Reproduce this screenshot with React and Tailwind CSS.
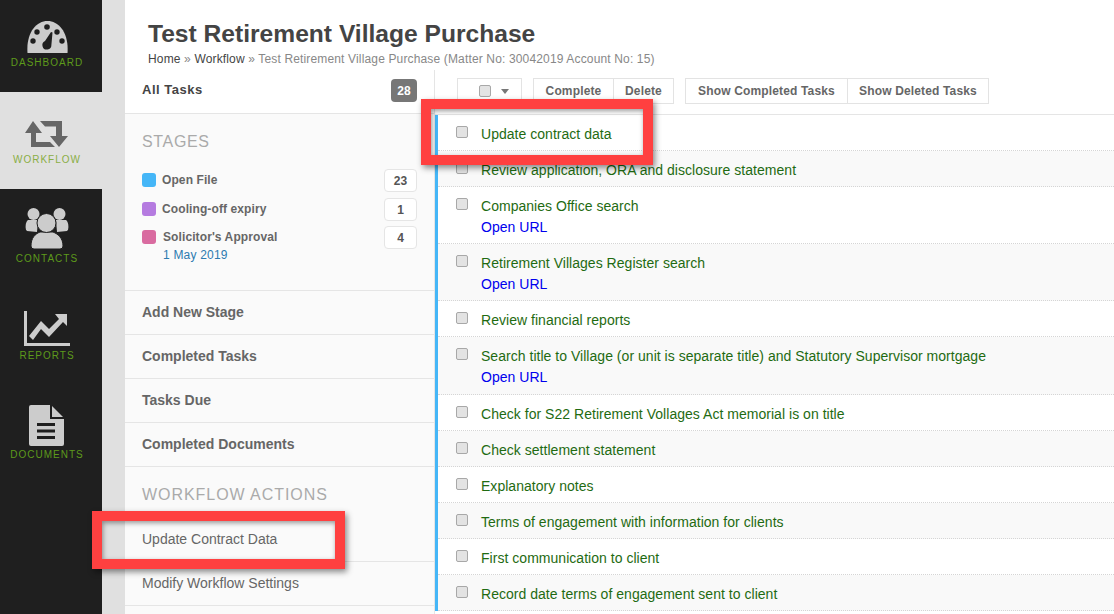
import React from 'react';

function NavItem({ label, active, height, gap, children }) {
  return (
    <div className={`flex flex-col items-center justify-end pb-[23px] pr-[8px] ${height} ${active ? 'bg-[#e0e0e0]' : ''}`}>
      <div className={gap}>{children}</div>
      <span className={`text-[10px] leading-[12px] tracking-[1px] ${active ? 'text-[#8aae45]' : 'text-[#5d9a1b]'}`}>{label}</span>
    </div>
  );
}

function GaugeIcon() {
  return (
    <svg width="41" height="32" viewBox="0 0 41 32" className="block">
      <path d="M0.5 32 C-1 12 9 0 20.5 0 C32 0 42 12 40.5 32 Z" fill="#cccccc" />
      <circle cx="20" cy="6" r="2.8" fill="#1f1f1f" />
      <circle cx="10" cy="11" r="2.7" fill="#1f1f1f" />
      <circle cx="30" cy="11" r="2.7" fill="#1f1f1f" />
      <circle cx="6" cy="20" r="2.7" fill="#1f1f1f" />
      <circle cx="35" cy="20" r="2.7" fill="#1f1f1f" />
      <path d="M24 11 L25.5 11.5 L24.4 24 A4.5 4.5 0 1 1 18 20 Z" fill="#1f1f1f" />
    </svg>
  );
}

function RetweetIcon() {
  return (
    <svg width="44" height="26" viewBox="0 0 44 26" className="block">
      <path d="M8 0 L17 12 L11 12 L11 21 L25 21 L30 26 L6 26 L6 12 L0 12 Z" fill="#666666" />
      <path d="M15 0 L37 0 L37 15 L43 15 L34 26 L25 15 L31 15 L31 5.5 L20 5.5 Z" fill="#666666" />
    </svg>
  );
}

function ContactsIcon() {
  return (
    <svg width="44" height="42" viewBox="0 0 44 42" className="block">
      <circle cx="8.5" cy="6" r="6" fill="#cccccc" />
      <circle cx="34.5" cy="6" r="6" fill="#cccccc" />
      <path d="M3 12 C0 14 0 22 2 23 L12 24 L13 12 Z" fill="#cccccc" />
      <path d="M41 12 C44 14 44 22 42 23 L32 24 L31 12 Z" fill="#cccccc" />
      <path d="M6 38 C6 30 10 26 15 24 L28 24 C33 26 38 30 38 38 Q38 41 35 41 L9 41 Q6 41 6 38 Z" fill="#cccccc" stroke="#1f1f1f" strokeWidth="1" />
      <circle cx="21.5" cy="15" r="9.5" fill="#cccccc" stroke="#1f1f1f" strokeWidth="1" />
    </svg>
  );
}

function ChartIcon() {
  return (
    <svg width="46" height="35" viewBox="0 0 46 35" className="block">
      <path d="M0 0 L3 0 L3 32 L46 32 L46 35 L0 35 Z" fill="#cccccc" />
      <path d="M5 25 L17 10 L25 18 L35 8 L31 3 L43 3 L43 15 L39 11 L25 26 L17 18 L9 29 Z" fill="#cccccc" />
    </svg>
  );
}

function DocIcon() {
  return (
    <svg width="36" height="41" viewBox="0 0 36 41" className="block">
      <path d="M2 0 L21 0 L21 14 L35 14 L35 39 Q35 41 33 41 L2 41 Q0 41 0 39 L0 2 Q0 0 2 0 Z" fill="#cccccc" />
      <path d="M23 1 L34 12 L23 12 Z" fill="#cccccc" />
      <rect x="8" y="18" width="18" height="3" fill="#1f1f1f" />
      <rect x="8" y="24.5" width="18" height="3" fill="#1f1f1f" />
      <rect x="8" y="31" width="18" height="3" fill="#1f1f1f" />
    </svg>
  );
}

function Checkbox() {
  return <span className="block w-[12px] h-[12px] rounded-[2px] bg-[#e3e3e3] border border-[#a8a8a8] shrink-0" />;
}

function Stage({ color, name, count, date, shift, height }) {
  return (
    <div className={`flex items-start pl-[17px] pr-[17px] ${height}`}>
      <span className={`w-[14px] h-[14px] mt-[4px] rounded-[3px] shrink-0 ${color}`} />
      <div className={`flex-1 ${shift}`}>
        <div className="text-[12px] leading-[22px] font-bold tracking-[0.1px] text-[#666]">{name}</div>
        {date && <div className="text-[12px] leading-[14px] text-[#2d7bb0] tracking-[0.2px]">{date}</div>}
      </div>
      <span className="w-[33px] h-[23px] flex items-center justify-center rounded-[4px] border border-[#e5e5e5] bg-white text-[12px] font-bold text-[#555]">{count}</span>
    </div>
  );
}

function TaskRow({ text, link, odd }) {
  return (
    <div className={`flex pl-[18px] pt-[9px] pb-[6.1px] border-b border-dotted border-[#d5d5d5] ${odd ? 'bg-[#f9f9f9]' : 'bg-white'}`}>
      <div className="mt-[2px] mr-[13px]"><Checkbox /></div>
      <div className="tracking-[0.03px]">
        <div className="text-[14px] leading-[20px] text-[#1f6b12]">{text}</div>
        {link && <div className="pt-[1px] text-[14px] leading-[20px] text-[#0000ee]">Open URL</div>}
      </div>
    </div>
  );
}

function ToolButton({ children, className }) {
  return (
    <button className={`h-[26px] border border-[#e3e3e3] bg-white text-[12px] font-bold tracking-[0.15px] text-[#666] ${className}`}>
      {children}
    </button>
  );
}

const tasks = [
  { text: 'Update contract data' },
  { text: 'Review application, ORA and disclosure statement' },
  { text: 'Companies Office search', link: true },
  { text: 'Retirement Villages Register search', link: true },
  { text: 'Review financial reports' },
  { text: 'Search title to Village (or unit is separate title) and Statutory Supervisor mortgage', link: true },
  { text: 'Check for S22 Retirement Vollages Act memorial is on title' },
  { text: 'Check settlement statement' },
  { text: 'Explanatory notes' },
  { text: 'Terms of engagement with information for clients' },
  { text: 'First communication to client' },
  { text: 'Record date terms of engagement sent to client' },
];

export default function App() {
  return (
    <div className="relative flex w-[1114px] h-[614px] overflow-hidden bg-white font-['Liberation_Sans',Arial,sans-serif]">
      {/* Sidebar */}
      <nav className="w-[102px] shrink-0 bg-[#1f1f1f]">
        <NavItem label="DASHBOARD" height="h-[92px]" gap="mb-[4px]"><GaugeIcon /></NavItem>
        <NavItem label="WORKFLOW" active height="h-[97px]" gap="mb-[7px]"><RetweetIcon /></NavItem>
        <NavItem label="CONTACTS" height="h-[99px]" gap="mb-[3px]"><ContactsIcon /></NavItem>
        <NavItem label="REPORTS" height="h-[97px]" gap="mb-[4px]"><ChartIcon /></NavItem>
        <NavItem label="DOCUMENTS" height="h-[99px]" gap="mb-[3px]"><DocIcon /></NavItem>
      </nav>
      <div className="w-[23px] shrink-0 bg-[#e0e0e0]" />

      <main className="flex-1 min-w-0 flex flex-col">
        {/* Header */}
        <header className="h-[70px] shrink-0 pl-[23px] pt-[19px]">
          <h1 className="text-[24.6px] leading-[29px] font-bold text-[#444]">Test Retirement Village Purchase</h1>
          <div className="mt-[3px] text-[12px] leading-[16px] tracking-[0.15px] text-[#888]">
            <span className="text-[#444]">Home</span> <span>»</span> <span className="text-[#444]">Workflow</span> <span>»</span> Test Retirement Village Purchase (Matter No: 30042019 Account No: 15)
          </div>
        </header>

        <div className="flex flex-1 min-h-0">
          {/* Stage panel */}
          <aside className="w-[310px] shrink-0 bg-[#fafafa] border-r border-[#e5e5e5]">
            <div className="h-[44px] flex items-center justify-between pl-[17px] pr-[17px] bg-white border-b border-[#e5e5e5]">
              <span className="text-[13px] font-bold tracking-[0.5px] text-[#444] -mt-[4px]">All Tasks</span>
              <span className="w-[26px] h-[23px] flex items-center justify-center rounded-[4px] bg-[#777] text-[12px] font-bold text-white -mt-[2px]">28</span>
            </div>
            <div className="h-[176px] pt-[18px]">
              <h2 className="pl-[17px] text-[16px] leading-[20px] tracking-[0.65px] text-[#aaa]">STAGES</h2>
              <div className="mt-[17px]">
                <Stage color="bg-[#45b6f7]" name="Open File" count="23" shift="pl-[6px]" height="h-[29px]" />
                <Stage color="bg-[#b57be0]" name="Cooling-off expiry" count="1" shift="pl-[6px]" height="h-[28px]" />
                <Stage color="bg-[#d96ba0]" name="Solicitor's Approval" count="4" date="1 May 2019" shift="pl-[7px]" height="h-[29px]" />
              </div>
            </div>
            {['Add New Stage', 'Completed Tasks', 'Tasks Due', 'Completed Documents'].map((item) => (
              <div key={item} className="h-[44px] flex items-center pl-[17px] border-t border-[#e5e5e5] text-[14px] font-bold text-[#666]">{item}</div>
            ))}
            <div className="h-[51px] border-t border-[#e5e5e5] pl-[17px] pt-[18px]">
              <h2 className="text-[16px] leading-[20px] tracking-[0.95px] text-[#aaa]">WORKFLOW ACTIONS</h2>
            </div>
            <div className="h-[44px] flex items-center pl-[17px] text-[14px] text-[#666]">Update Contract Data</div>
            <div className="h-[44px] flex items-center pl-[17px] border-t border-[#e5e5e5] text-[14px] text-[#666]">Modify Workflow Settings</div>
            <div className="border-t border-[#e5e5e5]" />
          </aside>

          {/* Task list */}
          <section className="flex-1 min-w-0">
            <div className="h-[45px] flex items-start pt-[8px] pl-[22px] border-b border-[#e5e5e5]">
              <div className="w-[65px] h-[26px] flex items-center justify-end gap-[10px] pr-[12px] border border-[#e3e3e3]">
                <Checkbox />
                <span className="w-0 h-0 border-x-[4px] border-x-transparent border-t-[5px] border-t-[#777]" />
              </div>
              <ToolButton className="w-[81px] ml-[11px]">Complete</ToolButton>
              <ToolButton className="w-[61px] -ml-px">Delete</ToolButton>
              <ToolButton className="w-[163px] ml-[11px]">Show Completed Tasks</ToolButton>
              <ToolButton className="w-[142px] -ml-px">Show Deleted Tasks</ToolButton>
            </div>
            <div className="border-l-[3px] border-[#45b6f7]">
              {tasks.map((task, i) => (
                <TaskRow key={task.text} text={task.text} link={task.link} odd={i % 2 === 1} />
              ))}
            </div>
          </section>
        </div>
      </main>

      {/* Red callouts drawn over the screenshot */}
      <div className="absolute left-[421px] top-[99px] w-[232px] h-[66px] border-[10px] border-[#ff4040] shadow-[2px_3px_6px_rgba(0,0,0,0.45),inset_1px_2px_5px_rgba(0,0,0,0.4)]" />
      <div className="absolute left-[92px] top-[511px] w-[253px] h-[58px] border-[10px] border-[#ff4040] shadow-[2px_3px_6px_rgba(0,0,0,0.45),inset_1px_2px_5px_rgba(0,0,0,0.4)]" />
    </div>
  );
}
